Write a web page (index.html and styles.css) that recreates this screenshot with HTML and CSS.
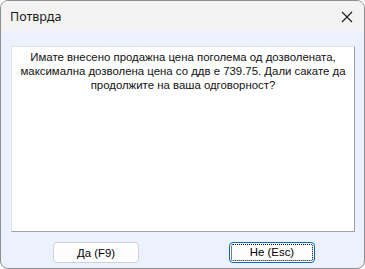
FILE: index.html
```html
<!DOCTYPE html>
<html lang="mk">
  <head>
    <meta charset="UTF-8" />
    <meta name="viewport" content="width=device-width, initial-scale=1.0" />
    <title>Потврда</title>
    <link rel="stylesheet" href="styles.css">
  </head>
  <body>
    <div class="window">
      <!-- Наслов на прозорецот -->
      <div class="titlebar">
        <span class="title">Потврда</span>
        <span class="close">
          <svg width="12" height="12" viewBox="0 0 12 12">
            <path d="M1 1 L11 11 M11 1 L1 11" stroke="#1a1a1a" stroke-width="1.1" fill="none" />
          </svg>
        </span>
      </div>

      <div class="content">
        <!-- Порака -->
        <div class="message">
          Имате внесено продажна цена поголема од дозволената, максимална дозволена цена со ддв е 739.75. Дали сакате да продолжите на ваша одговорност?
        </div>

        <!-- Копчиња -->
        <div class="buttons">
          <button class="btn">Да (F9)</button>
          <button class="btn btn-focus"><span class="focus-ring">Не (Esc)</span></button>
        </div>
      </div>
    </div>
  </body>
</html>
```

FILE: styles.css
```css
body {
  margin: 0;
  background: #ffffff;
  font-family: "Liberation Sans", Arial, sans-serif;
}

.window {
  width: 365px;
  height: 269px;
  box-sizing: border-box;
  border: 1px solid #8e8e8e;
  border-radius: 8px;
  overflow: hidden;
  display: flex;
  flex-direction: column;
  background: #ebf2fd;
}

.titlebar {
  height: 30px;
  flex: none;
  background: #f3f3f3;
  display: flex;
  align-items: center;
  justify-content: space-between;
  padding: 0 11px 0 9px;
}

.title {
  font-family: "Noto Sans", sans-serif;
  font-size: 12.5px;
  color: #1a1a1a;
}

.close {
  display: flex;
  margin-top: 1px;
}

.content {
  flex: 1;
  display: flex;
  flex-direction: column;
  padding: 15px 9px 0 10px;
}

.message {
  height: 186px;
  box-sizing: border-box;
  background: #ffffff;
  border-top: 1px solid #e3e3e3;
  border-left: 1px solid #e3e3e3;
  border-right: 1px solid #a0a0a0;
  border-bottom: 1px solid #a0a0a0;
  text-align: center;
  font-size: 11.4px;
  line-height: 14px;
  color: #111111;
  padding: 3px 8px 0;
}

.buttons {
  display: flex;
  justify-content: space-between;
  padding: 10px 40px 0 42px;
}

.btn {
  width: 86px;
  height: 21px;
  box-sizing: border-box;
  background: #fdfdfd;
  border: 1px solid #d0d0d0;
  border-radius: 4px;
  font-family: "Liberation Sans", Arial, sans-serif;
  font-size: 11.4px;
  color: #000000;
  padding: 0;
}

.btn-focus {
  border: 1px solid #0067c0;
  padding: 1px;
}

.focus-ring {
  display: block;
  height: 100%;
  box-sizing: border-box;
  border: 1px dotted #000000;
  border-radius: 2px;
  line-height: 15px;
}
```
